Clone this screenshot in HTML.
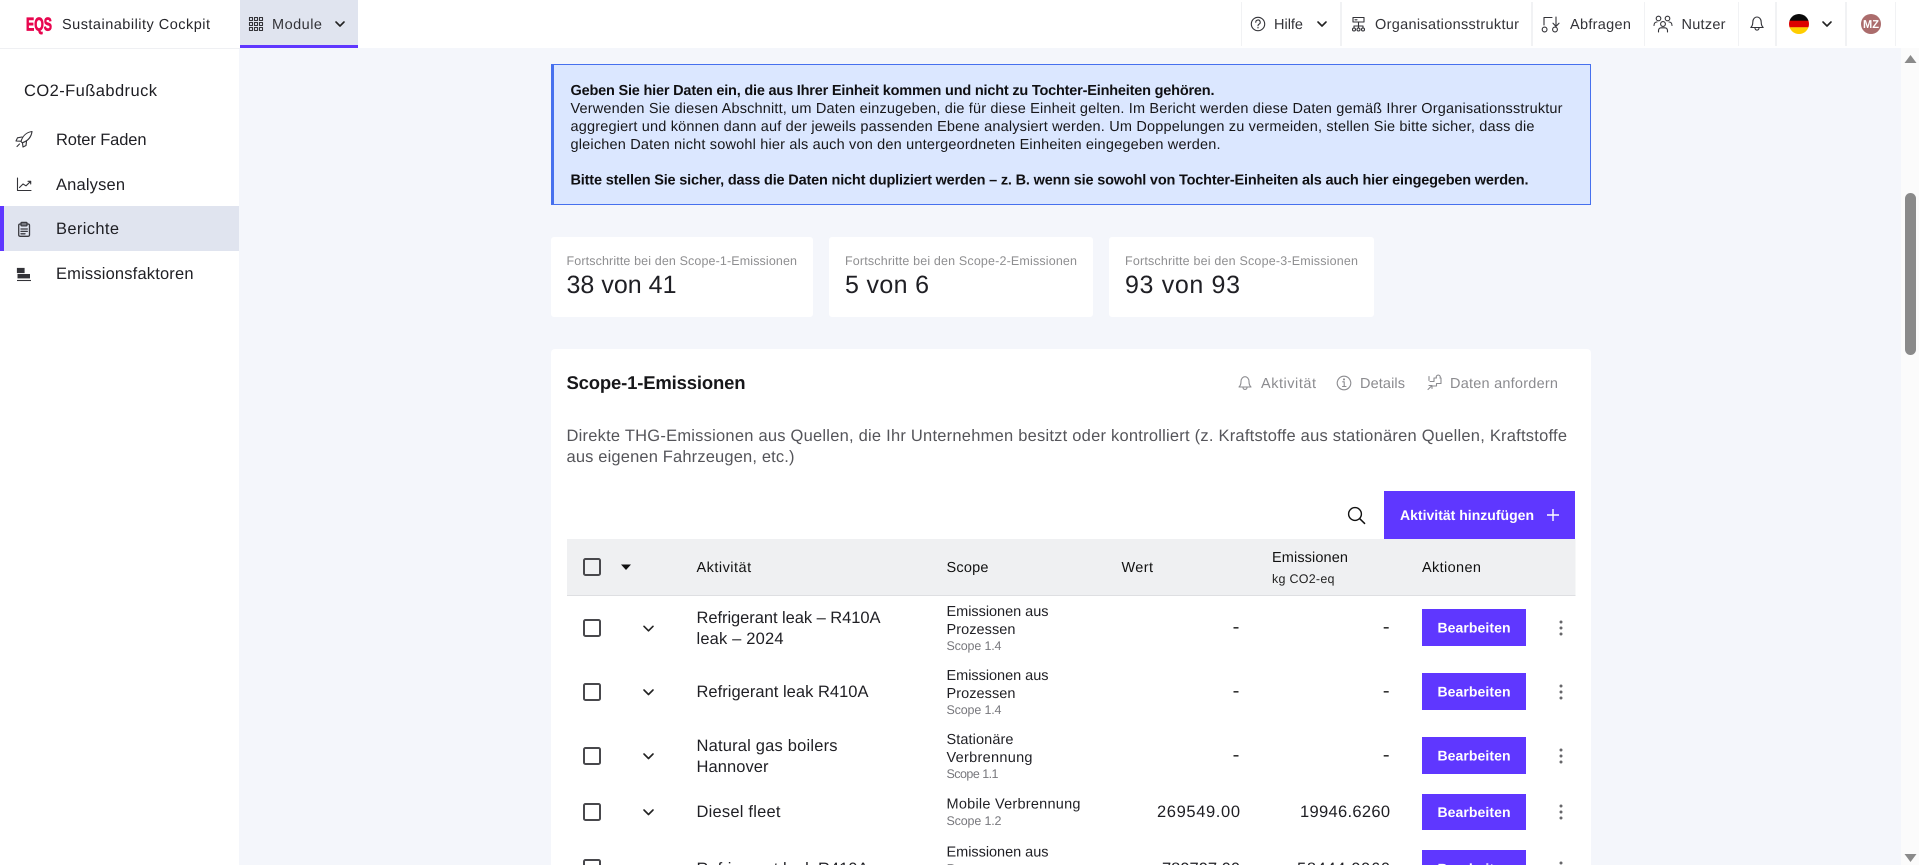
<!DOCTYPE html>
<html lang="de">
<head>
<meta charset="utf-8">
<title>Sustainability Cockpit</title>
<style>
html,body{margin:0;padding:0;width:1919px;height:865px;overflow:hidden;background:#f4f6fb}
svg{display:block;position:absolute;left:0;top:0}
text{font-family:"Liberation Sans",sans-serif;fill:#1f1f24;white-space:pre;text-rendering:geometricPrecision}
.t{font-size:14.5px}
.b{font-size:14.5px;font-weight:700}
.n{font-size:16.5px}
.s{font-size:12.5px;fill:#77777c}
.g{font-size:14.5px;fill:#8b8b8f}
.w{font-size:14px;font-weight:700;fill:#fff}
.d{font-size:16.5px;fill:#55555a}
.v{font-size:25px}
.ic{fill:none;stroke:#333338;stroke-width:1.1;stroke-linecap:round;stroke-linejoin:round}
.ig{fill:none;stroke:#8b8b8f;stroke-width:1.1;stroke-linecap:round;stroke-linejoin:round}
.cb{fill:none;stroke:#48484c;stroke-width:2}
.ch{fill:none;stroke:#222;stroke-width:1.6;stroke-linecap:round;stroke-linejoin:round}
.bt{fill:#5f37ff}
.k{fill:#66666a}
</style>
</head>
<body>
<svg xmlns="http://www.w3.org/2000/svg" width="1919" height="865" viewBox="0 0 1919 865">
<defs><clipPath id="f"><circle cx="1799" cy="24" r="10"/></clipPath></defs>

<!-- backgrounds -->
<rect x="0" y="0" width="1919" height="865" fill="#f4f6fb"/>
<rect x="0" y="0" width="239" height="865" fill="#fff"/>
<rect x="0" y="0" width="1919" height="48" fill="#fff"/>
<rect x="0" y="48" width="240" height="1" fill="#eff0f3"/>

<!-- scrollbar -->
<rect x="1901" y="48" width="18" height="817" fill="#fbfbfb"/>
<rect x="1905" y="193" width="11" height="162" rx="5.5" fill="#8a8a8a"/>
<path d="M1910.5 55 L1916.5 63 H1904.5 Z" fill="#8a8a8a"/>
<path d="M1910.5 862 L1916.5 854 H1904.5 Z" fill="#8a8a8a"/>

<!-- header left -->
<text x="26" y="30.5" textLength="26" lengthAdjust="spacingAndGlyphs" style="fill:#e8064f;stroke:#e8064f;stroke-width:.8;font-size:18.5px;font-weight:700">EQS</text>
<text class="t" x="62" y="29" textLength="148" style="fill:#26262b">Sustainability Cockpit</text>
<rect x="240" y="0" width="118" height="45" fill="#e0e4ef"/>
<rect x="240" y="45" width="118" height="3" fill="#5f37ff"/>
<g class="ic">
<rect x="249.5" y="17.5" width="3" height="3"/><rect x="254.5" y="17.5" width="3" height="3"/><rect x="259.5" y="17.5" width="3" height="3"/>
<rect x="249.5" y="22.5" width="3" height="3"/><rect x="254.5" y="22.5" width="3" height="3"/><rect x="259.5" y="22.5" width="3" height="3"/>
<rect x="249.5" y="27.5" width="3" height="3"/><rect x="254.5" y="27.5" width="3" height="3"/><rect x="259.5" y="27.5" width="3" height="3"/>
</g>
<text class="t" x="272" y="29" textLength="50" style="fill:#333338">Module</text>
<path class="ch" d="M336 22 L340 26 L344 22"/>

<!-- header right -->
<g fill="#f1f2f4">
<rect x="1241" y="2" width="1" height="44"/><rect x="1340" y="2" width="2" height="44"/><rect x="1531" y="2" width="2" height="44"/>
<rect x="1644" y="2" width="1" height="44"/><rect x="1738" y="2" width="1" height="44"/><rect x="1775" y="2" width="2" height="44"/>
<rect x="1845" y="2" width="2" height="44"/><rect x="1895" y="2" width="1" height="44"/>
</g>
<circle class="ic" cx="1258" cy="24" r="6.7"/>
<path class="ic" d="M1255.8 22.3 A2.2 2.2 0 1 1 1258.9 24.2 C1258.2 24.6 1258 25 1258 25.8"/>
<circle cx="1258" cy="27.8" r=".7" fill="#333338"/>
<text class="t" x="1274" y="29" textLength="29" style="fill:#333338">Hilfe</text>
<path class="ch" d="M1318 22 L1322 26 L1326 22"/>

<g class="ic">
<rect x="1353" y="17.5" width="11" height="4.5"/>
<path d="M1355 19.8 H1357"/>
<path d="M1358.5 22 V26 M1354 28 V26 H1363 V28 M1358.5 26 V28"/>
<circle cx="1354" cy="29.5" r="1.5"/><circle cx="1358.5" cy="29.5" r="1.5"/><circle cx="1363" cy="29.5" r="1.5"/>
</g>
<text class="t" x="1375" y="29" textLength="144" style="fill:#333338">Organisationsstruktur</text>

<g class="ic">
<path d="M1544 25 V17.5 H1552"/>
<path d="M1556 17 V26 M1553 23.2 L1556 26.4 L1559 23.2"/>
<circle cx="1544.6" cy="29.5" r="2.4"/><circle cx="1555" cy="29.5" r="2.4"/>
</g>
<text class="t" x="1570" y="29" textLength="61" style="fill:#333338">Abfragen</text>

<g class="ic">
<circle cx="1658.5" cy="18.5" r="2.3"/><circle cx="1667.5" cy="18.5" r="2.3"/><circle cx="1663" cy="24" r="2.4"/>
<path d="M1654 25.5 C1654 23 1655.5 22 1657 22 M1672 25.5 C1672 23 1670.5 22 1669 22"/>
<path d="M1658.5 32 V30.5 C1658.5 28.6 1660 27.8 1661 27.8 H1665 C1666 27.8 1667.5 28.6 1667.5 30.5 V32"/>
</g>
<text class="t" x="1681.5" y="29" textLength="44" style="fill:#333338">Nutzer</text>

<g class="ic">
<path d="M1750.8 27.5 C1752.5 26 1752.8 24.5 1752.8 22 C1752.8 19 1754.8 17 1757 17 C1759.2 17 1761.2 19 1761.2 22 C1761.2 24.5 1761.5 26 1763.2 27.5 Z"/>
<path d="M1755 28 C1755 30.8 1759 30.8 1759 28"/>
</g>

<g clip-path="url(#f)">
<rect x="1789" y="14" width="20" height="7" fill="#0a0a0a"/>
<rect x="1789" y="20.7" width="20" height="6.7" fill="#dd0000"/>
<rect x="1789" y="27.3" width="20" height="6.7" fill="#ffce00"/>
</g>
<path class="ch" d="M1823 22 L1827 26 L1831 22"/>
<circle cx="1871" cy="24" r="10" fill="#ab6c6c"/>
<text x="1863" y="28" textLength="16" lengthAdjust="spacingAndGlyphs" style="fill:#fff;font-size:11.5px;font-weight:700">MZ</text>

<!-- sidebar -->
<text class="n" x="24" y="96" textLength="133" style="fill:#1d1d22">CO2-Fußabdruck</text>

<g class="ic">
<path d="M21 141.5 C22.5 136 26.5 132.3 32 131.5 C31.3 137 27.6 141 22.3 142.8 Z"/>
<path d="M22 137 L17.5 137.8 L16 141 L20.3 141.2"/>
<path d="M26.5 141.5 L26 145.5 L23 147 L22.5 143"/>
<path d="M19.5 144 L17 146.5"/>
</g>
<text class="n" x="56" y="145" textLength="90.5">Roter Faden</text>

<g class="ic">
<path d="M17.5 178 V190.5 H31"/>
<path d="M19.5 187.5 L23 184 L26 185.8 L30.5 181.5 M28 181.3 H30.7 V184"/>
</g>
<text class="n" x="56" y="190" textLength="69">Analysen</text>

<rect x="0" y="206" width="239" height="45" fill="#e0e4ef"/>
<rect x="0" y="206" width="4" height="45" fill="#5f37ff"/>
<g class="ic" style="stroke:#3a3a40;stroke-width:1.3">
<rect x="18.7" y="224" width="10.8" height="12.3" rx="1.4"/>
<rect x="21" y="222.4" width="6" height="3.4" rx=".8"/>
<path d="M21 229 H27.3 M21 231.4 H27.3 M21 233.8 H25"/>
</g>
<text class="n" x="56" y="234" textLength="63">Berichte</text>

<rect x="17.5" y="268.5" width="6.5" height="4" fill="#333338" stroke="#333338" stroke-width="1.2"/>
<rect x="17.5" y="274" width="12.5" height="4.4" fill="#333338"/>
<path d="M17 280.5 H31" stroke="#333338" stroke-width="1.1"/>
<text class="n" x="56" y="279" textLength="137.5">Emissionsfaktoren</text>

<!-- alert -->
<rect x="551.5" y="64.5" width="1039" height="140" fill="#dbe7ff" stroke="#4670ee"/>
<rect x="551" y="64" width="3" height="141" fill="#4670ee"/>
<text class="b" x="570.5" y="95" textLength="644" style="fill:#0f0f12">Geben Sie hier Daten ein, die aus Ihrer Einheit kommen und nicht zu Tochter-Einheiten gehören.</text>
<text class="t" x="570.5" y="113" textLength="992" style="fill:#17171a">Verwenden Sie diesen Abschnitt, um Daten einzugeben, die für diese Einheit gelten. Im Bericht werden diese Daten gemäß Ihrer Organisationsstruktur</text>
<text class="t" x="570.5" y="131" textLength="964" style="fill:#17171a">aggregiert und können dann auf der jeweils passenden Ebene analysiert werden. Um Doppelungen zu vermeiden, stellen Sie bitte sicher, dass die</text>
<text class="t" x="570.5" y="149" textLength="650" style="fill:#17171a">gleichen Daten nicht sowohl hier als auch von den untergeordneten Einheiten eingegeben werden.</text>
<text class="b" x="570.5" y="184.5" textLength="958" style="fill:#0f0f12">Bitte stellen Sie sicher, dass die Daten nicht dupliziert werden – z. B. wenn sie sowohl von Tochter-Einheiten als auch hier eingegeben werden.</text>

<!-- stat cards -->
<rect x="551" y="237" width="262" height="80" rx="3" fill="#fff"/>
<rect x="829" y="237" width="264" height="80" rx="3" fill="#fff"/>
<rect x="1109" y="237" width="265" height="80" rx="3" fill="#fff"/>
<text class="s" x="566.5" y="265" textLength="230.5" style="fill:#8e8e90">Fortschritte bei den Scope-1-Emissionen</text>
<text class="s" x="845" y="265" textLength="232" style="fill:#8e8e90">Fortschritte bei den Scope-2-Emissionen</text>
<text class="s" x="1125" y="265" textLength="233" style="fill:#8e8e90">Fortschritte bei den Scope-3-Emissionen</text>
<text class="v" x="566.5" y="293" textLength="110">38 von 41</text>
<text class="v" x="845" y="293" textLength="84">5 von 6</text>
<text class="v" x="1125" y="293" textLength="115">93 von 93</text>

<!-- main card -->
<path d="M551 865 V353 a4 4 0 0 1 4 -4 H1587 a4 4 0 0 1 4 4 V865 Z" fill="#fff"/>
<text x="566.5" y="389" textLength="179" style="font-size:18.5px;font-weight:700;fill:#17171a">Scope-1-Emissionen</text>

<g class="ig">
<path d="M1239 387 C1240.7 385.5 1241 384 1241 381.5 C1241 378.5 1243 376.7 1245 376.7 C1247 376.7 1249 378.5 1249 381.5 C1249 384 1249.3 385.5 1251 387 Z"/>
<path d="M1243 387.5 C1243 390 1247 390 1247 387.5"/>
</g>
<text class="g" x="1261" y="388" textLength="55">Aktivität</text>
<g class="ig">
<circle cx="1344" cy="383" r="6.8"/>
<path d="M1342.7 381.8 H1344.2 V386.5 M1342.5 386.5 H1346"/>
<circle cx="1344" cy="379.4" r=".5"/>
</g>
<text class="g" x="1360" y="388" textLength="45">Details</text>
<g class="ig">
<path d="M1434 378 H1436.5 A2 2 0 1 1 1440 378 H1441 V383.5 H1436.5 V386 M1436.5 386 H1433 M1434 378 V381.5 H1430"/>
<path d="M1428 389.5 L1432 385.5 M1429 385.5 H1432 V388.5"/>
<path d="M1429 376.5 V380.5"/>
</g>
<text class="g" x="1450" y="388" textLength="108">Daten anfordern</text>

<text class="d" x="566.5" y="441" textLength="1000.5">Direkte THG-Emissionen aus Quellen, die Ihr Unternehmen besitzt oder kontrolliert (z. Kraftstoffe aus stationären Quellen, Kraftstoffe</text>
<text class="d" x="566.5" y="462" textLength="228">aus eigenen Fahrzeugen, etc.)</text>

<!-- toolbar -->
<circle cx="1355" cy="514" r="6.4" fill="none" stroke="#111" stroke-width="1.4"/>
<path d="M1359.6 518.6 L1364.6 523.4" stroke="#111" stroke-width="1.5" stroke-linecap="round"/>
<rect class="bt" x="1384" y="491" width="191" height="48"/>
<text class="w" x="1400" y="520" textLength="134">Aktivität hinzufügen</text>
<path d="M1553 509 V521 M1547 515 H1559" stroke="#fff" stroke-width="1.4" fill="none"/>

<!-- table head -->
<rect x="567" y="539" width="1008.5" height="56" fill="#eff0f2"/>
<rect x="567" y="595" width="1008.5" height="1" fill="#dedfe2"/>
<rect class="cb" x="584" y="559" width="16" height="16" rx="1.5"/>
<path d="M621 564.5 H631 L626 570 Z" fill="#111"/>
<g>
<text class="t" x="696.5" y="572" textLength="54.6" style="fill:#111">Aktivität</text>
<text class="t" x="946.5" y="572" textLength="42" style="fill:#111">Scope</text>
<text class="t" x="1121.5" y="572" textLength="31.5" style="fill:#111">Wert</text>
<text class="t" x="1272" y="562" textLength="76" style="fill:#111">Emissionen</text>
<text class="s" x="1272" y="583" textLength="62.5" style="fill:#222">kg CO2-eq</text>
<text class="t" x="1422" y="572" textLength="59" style="fill:#111">Aktionen</text>
</g>

<!-- row 1 -->
<rect class="cb" x="584" y="620" width="16" height="16" rx="1.5"/>
<path class="ch" d="M644 626.3 L648.5 630.8 L653 626.3"/>
<text class="n" x="696.5" y="623" textLength="184">Refrigerant leak – R410A</text>
<text class="n" x="696.5" y="644" textLength="87">leak – 2024</text>
<text class="t" x="946.5" y="616" textLength="102">Emissionen aus</text>
<text class="t" x="946.5" y="634" textLength="69">Prozessen</text>
<text class="s" x="946.5" y="650" textLength="55">Scope 1.4</text>
<rect x="1233.5" y="627" width="5" height="1.6" fill="#333"/>
<rect x="1383.7" y="627" width="5" height="1.6" fill="#333"/>
<rect class="bt" x="1422" y="609" width="104" height="37"/>
<text class="w" x="1437.5" y="632.5" textLength="73">Bearbeiten</text>
<circle class="k" cx="1561" cy="622" r="1.5"/><circle class="k" cx="1561" cy="628" r="1.5"/><circle class="k" cx="1561" cy="634" r="1.5"/>

<!-- row 2 -->
<rect class="cb" x="584" y="684" width="16" height="16" rx="1.5"/>
<path class="ch" d="M644 690 L648.5 694.5 L653 690"/>
<text class="n" x="696.5" y="697" textLength="172">Refrigerant leak R410A</text>
<text class="t" x="946.5" y="680" textLength="102">Emissionen aus</text>
<text class="t" x="946.5" y="698" textLength="69">Prozessen</text>
<text class="s" x="946.5" y="714" textLength="55">Scope 1.4</text>
<rect x="1233.5" y="691" width="5" height="1.6" fill="#333"/>
<rect x="1383.7" y="691" width="5" height="1.6" fill="#333"/>
<rect class="bt" x="1422" y="673" width="104" height="37"/>
<text class="w" x="1437.5" y="696.5" textLength="73">Bearbeiten</text>
<circle class="k" cx="1561" cy="686" r="1.5"/><circle class="k" cx="1561" cy="692" r="1.5"/><circle class="k" cx="1561" cy="698" r="1.5"/>

<!-- row 3 -->
<rect class="cb" x="584" y="748" width="16" height="16" rx="1.5"/>
<path class="ch" d="M644 754 L648.5 758.5 L653 754"/>
<text class="n" x="696.5" y="751" textLength="141">Natural gas boilers</text>
<text class="n" x="696.5" y="772" textLength="72">Hannover</text>
<text class="t" x="946.5" y="744" textLength="67">Stationäre</text>
<text class="t" x="946.5" y="762" textLength="86">Verbrennung</text>
<text class="s" x="946.5" y="778" textLength="52">Scope 1.1</text>
<rect x="1233.5" y="755" width="5" height="1.6" fill="#333"/>
<rect x="1383.7" y="755" width="5" height="1.6" fill="#333"/>
<rect class="bt" x="1422" y="737" width="104" height="37"/>
<text class="w" x="1437.5" y="760.5" textLength="73">Bearbeiten</text>
<circle class="k" cx="1561" cy="750" r="1.5"/><circle class="k" cx="1561" cy="756" r="1.5"/><circle class="k" cx="1561" cy="762" r="1.5"/>

<!-- row 4 -->
<rect class="cb" x="584" y="804" width="16" height="16" rx="1.5"/>
<path class="ch" d="M644 810 L648.5 814.5 L653 810"/>
<text class="n" x="696.5" y="817" textLength="84">Diesel fleet</text>
<text class="t" x="946.5" y="808.5" textLength="134">Mobile Verbrennung</text>
<text class="s" x="946.5" y="825" textLength="55">Scope 1.2</text>
<text class="n" x="1157" y="817" textLength="83">269549.00</text>
<text class="n" x="1300" y="817" textLength="90">19946.6260</text>
<rect class="bt" x="1422" y="794" width="104" height="36"/>
<text class="w" x="1437.5" y="817" textLength="73">Bearbeiten</text>
<circle class="k" cx="1561" cy="806" r="1.5"/><circle class="k" cx="1561" cy="812" r="1.5"/><circle class="k" cx="1561" cy="818" r="1.5"/>

<!-- row 5 (clipped) -->
<rect class="cb" x="584" y="860" width="16" height="16" rx="1.5"/>
<path class="ch" d="M644 866 L648.5 870.5 L653 866"/>
<text class="n" x="696.5" y="874" textLength="172">Refrigerant leak R410A</text>
<text class="t" x="946.5" y="856.5" textLength="102">Emissionen aus</text>
<text class="t" x="946.5" y="874.5" textLength="69">Prozessen</text>
<text class="n" x="1162" y="874" textLength="78">789797.00</text>
<text class="n" x="1297" y="874" textLength="93">58444.9960</text>
<rect class="bt" x="1422" y="850" width="104" height="37"/>
<text class="w" x="1437.5" y="873.5" textLength="73">Bearbeiten</text>
<circle class="k" cx="1561" cy="863" r="1.5"/><circle class="k" cx="1561" cy="869" r="1.5"/>
</svg>
</body>
</html>
